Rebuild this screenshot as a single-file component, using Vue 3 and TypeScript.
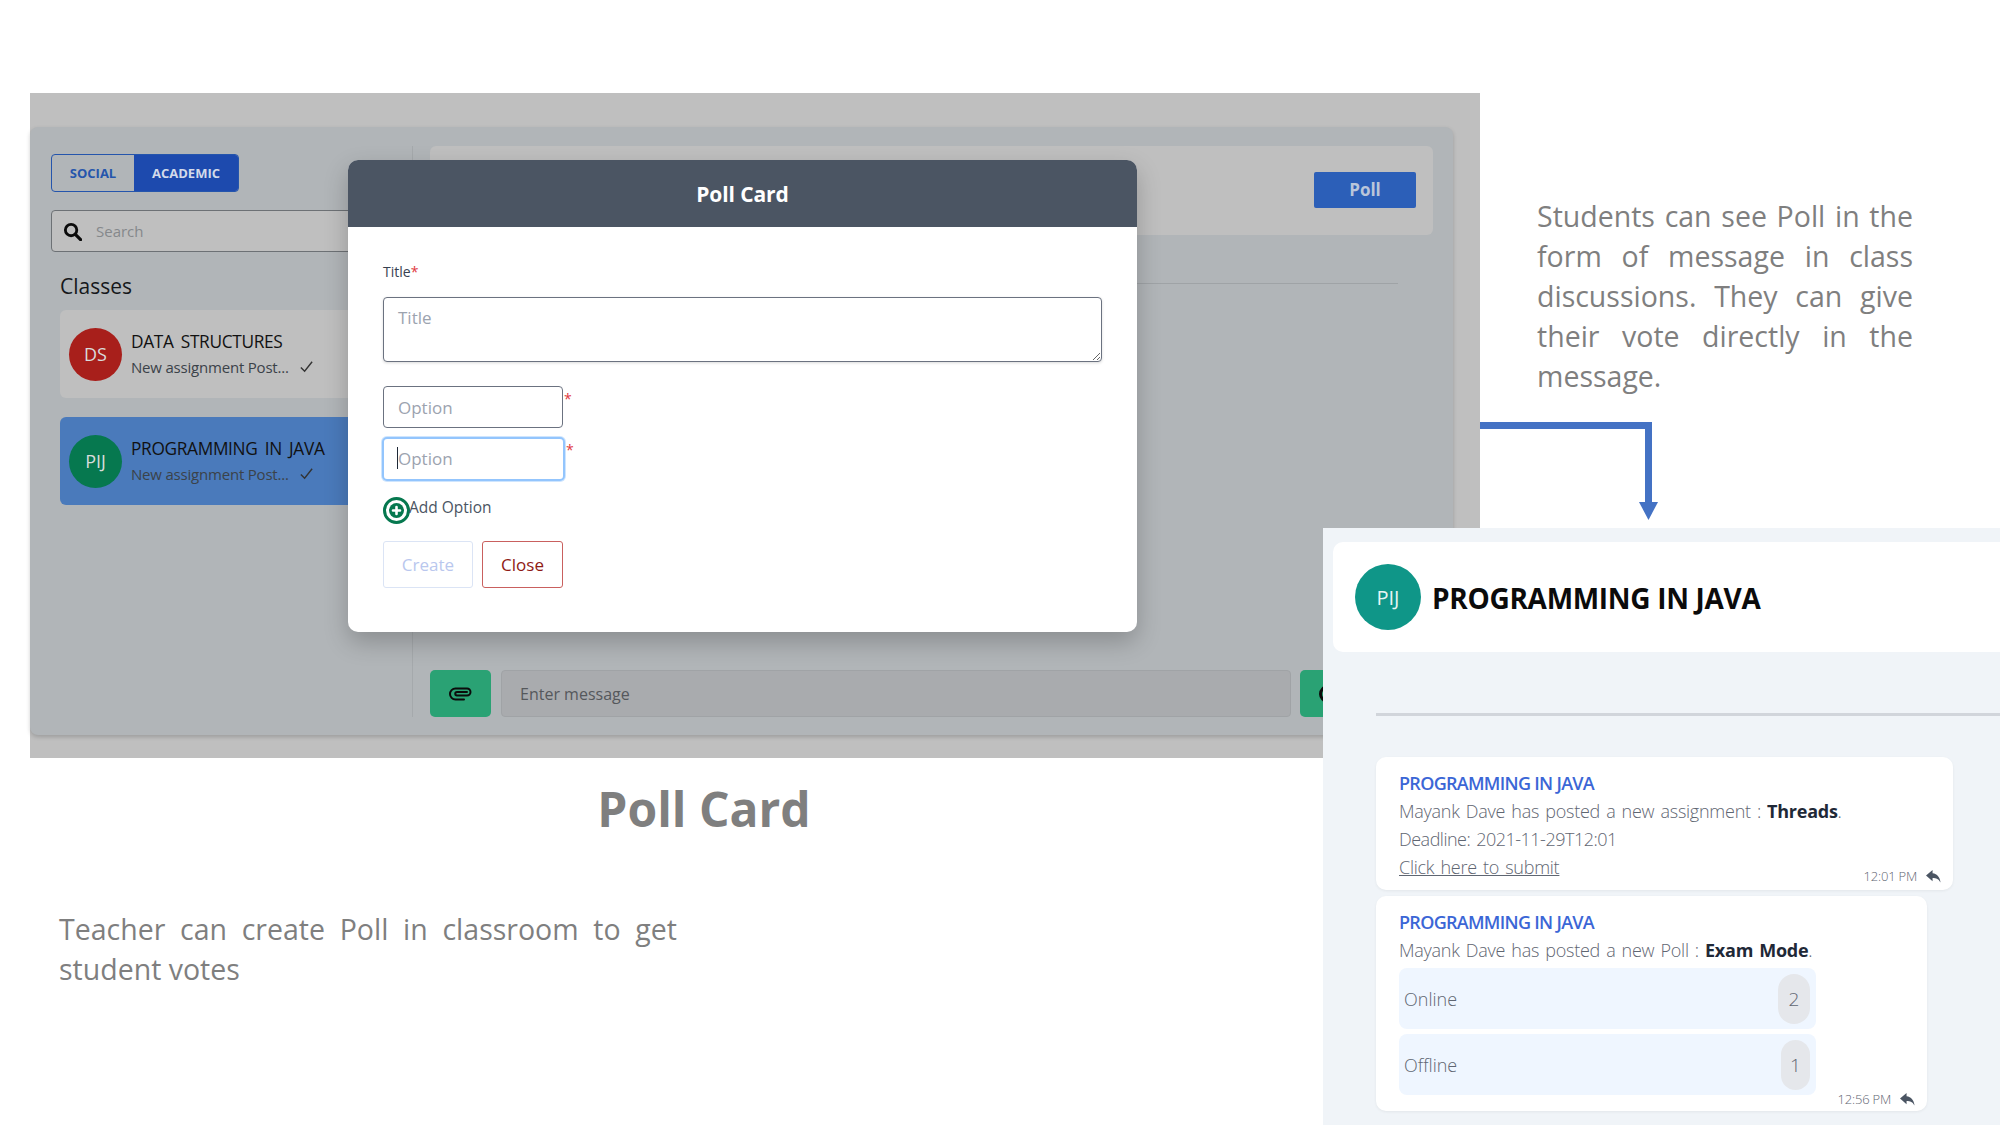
<script setup lang="ts">
interface ClassRow { initials: string; name: string; tone: string; active: boolean }
const classes: ClassRow[] = [
  { initials: 'DS', name: 'DATA STRUCTURES', tone: 'red', active: false },
  { initials: 'PIJ', name: 'PROGRAMMING IN JAVA', tone: 'green', active: true },
]
</script>

<template>
  <div class="page">
    <div class="top">
      <section class="shot">
        <div class="app">
          <aside class="sidebar">
            <div class="tabs">
              <span class="tab">SOCIAL</span>
              <span class="tab on">ACADEMIC</span>
            </div>
            <div class="search">
              <svg class="search-icon" viewBox="0 0 20 20" width="19" height="19">
                <circle cx="8.5" cy="8.5" r="6" fill="none" stroke="#0b0b0b" stroke-width="3" />
                <path d="M13 13l5.5 5.5" stroke="#0b0b0b" stroke-width="3.4" stroke-linecap="round" />
              </svg>
              <span>Search</span>
            </div>
            <h3 class="classes-title">Classes</h3>
            <div v-for="c in classes" :key="c.initials" class="class-row" :class="{ active: c.active }">
              <span class="side-avatar" :class="c.tone">{{ c.initials }}</span>
              <div class="class-text">
                <div class="class-name">{{ c.name }}</div>
                <div class="class-sub">
                  New assignment Post...
                  <svg viewBox="0 0 16 16" width="15" height="15">
                    <path d="M2 9l4 4 8-10" fill="none" stroke="#333" stroke-width="1.5" />
                  </svg>
                </div>
              </div>
            </div>
          </aside>
          <main class="main">
            <div class="poll-bar"><span class="poll-btn">Poll</span></div>
            <div class="main-rule"></div>
            <div class="composer">
              <span class="attach">
                <svg viewBox="0 0 24 14" width="24" height="14">
                  <path d="M15 12.500H6.500a5.500 5.500 0 0 1 0-11H18a3.500 3.500 0 0 1 0 7H8a1.750 1.750 0 0 1 0-3.500h10" fill="none" stroke="#0b0b0b" stroke-width="2" stroke-linecap="round" />
                </svg>
              </span>
              <span class="msg-input">Enter message</span>
              <span class="send"><i class="send-ring"></i></span>
            </div>
          </main>
        </div>

        <div class="modal">
          <header class="modal-head">Poll Card</header>
          <div class="modal-body">
            <label class="field-label">Title<span class="req">*</span></label>
            <textarea class="title-area" placeholder="Title"></textarea>
            <div class="opt-row first">
              <input class="opt" placeholder="Option" />
              <span class="req">*</span>
            </div>
            <div class="opt-row second">
              <div class="focus-wrap">
                <input class="opt focus" placeholder="Option" />
                <i class="caret"></i>
              </div>
              <span class="req">*</span>
            </div>
            <div class="add-row">
              <svg viewBox="0 0 27 27" width="27" height="27">
                <circle cx="13.5" cy="13.5" r="12" fill="#fff" stroke="#06784f" stroke-width="3" />
                <circle cx="13.5" cy="13.5" r="7.500" fill="#06784f" />
                <path d="M13.5 10v7M10 13.500h7" stroke="#fff" stroke-width="2.600" stroke-linecap="round" />
              </svg>
              <span>Add Option</span>
            </div>
            <div class="modal-btns">
              <button class="btn create">Create</button>
              <button class="btn close">Close</button>
            </div>
          </div>
        </div>
      </section>

      <p class="note">Students can see Poll in the form of message in class discussions. They can give their vote directly in the message.</p>
    </div>

    <h1 class="caption">Poll Card</h1>
    <p class="teacher">Teacher can create Poll in classroom to get student votes</p>

    <svg class="connector" viewBox="0 0 180 100" width="180" height="100">
      <path d="M0 3.500H168.500V82" fill="none" stroke="#4472c4" stroke-width="7" />
      <path d="M159 80h19l-9.500 18z" fill="#4472c4" />
    </svg>

    <aside class="panel">
      <div class="panel-head">
        <span class="panel-avatar">PIJ</span>
        <span class="panel-title">PROGRAMMING IN JAVA</span>
      </div>
      <div class="panel-rule"></div>

      <article class="msg msg-a">
        <div class="msg-title">PROGRAMMING IN JAVA</div>
        <div class="msg-line">Mayank Dave has posted a new assignment : <b>Threads</b>.</div>
        <div class="msg-line tight">Deadline: 2021-11-29T12:01</div>
        <div class="msg-line"><a class="link">Click here to submit</a></div>
        <div class="stamp">
          12:01 PM
          <svg viewBox="0 0 18 16" width="17" height="15"><path d="M8 1L1 7l7 6V9.500c4 0 6.500 1 8.500 5C16 9 13 5 8 4.500z" fill="#4b5563" /></svg>
        </div>
      </article>

      <article class="msg msg-b">
        <div class="msg-title">PROGRAMMING IN JAVA</div>
        <div class="msg-line">Mayank Dave has posted a new Poll : <b>Exam Mode</b>.</div>
        <div class="poll-list">
          <div class="poll-opt"><span>Online</span><span class="badge">2</span></div>
          <div class="poll-opt"><span>Offline</span><span class="badge narrow">1</span></div>
        </div>
        <div class="stamp">
          12:56 PM
          <svg viewBox="0 0 18 16" width="17" height="15"><path d="M8 1L1 7l7 6V9.500c4 0 6.500 1 8.500 5C16 9 13 5 8 4.500z" fill="#4b5563" /></svg>
        </div>
      </article>
    </aside>
  </div>
</template>

<style scoped>
.page {
  position: relative;
  width: 2000px;
  height: 1125px;
  overflow: hidden;
  background: #fff;
  font-family: "Open Sans", "Noto Sans", sans-serif;
  color: #7f7f7f;
}
.top {
  display: flex;
  align-items: flex-start;
  padding: 93px 0 0 30px;
}
.shot {
  position: relative;
  flex: none;
  width: 1450px;
  height: 665px;
  padding-top: 34px;
  box-sizing: border-box;
  background: #bfbfbf;
}
.app {
  display: flex;
  width: 1423px;
  height: 608px;
  box-sizing: border-box;
  background: #b1b5b8;
  border-radius: 8px;
  box-shadow: 0 2px 4px rgba(0, 0, 0, 0.18);
}
.sidebar {
  flex: none;
  width: 382px;
  box-sizing: border-box;
  padding: 27px 12px 0 21px;
}
.tabs {
  display: flex;
  width: 188px;
  height: 38px;
  box-sizing: border-box;
  border: 1px solid #2555ac;
  border-radius: 4px;
  overflow: hidden;
}
.tab {
  display: flex;
  align-items: center;
  justify-content: center;
  width: 82px;
  font-size: 13px;
  font-weight: 700;
  color: #2555ac;
}
.tab.on {
  flex: 1;
  background: #1d4aae;
  color: #d3daea;
}
.search {
  display: flex;
  align-items: center;
  gap: 14px;
  height: 42px;
  margin-top: 18px;
  padding-left: 11px;
  box-sizing: border-box;
  background: #bfbfbf;
  border: 1px solid #6d7175;
  border-radius: 4px;
  font-size: 15px;
  color: #85888b;
}
.classes-title {
  margin: 20px 0 10px 9px;
  font-size: 21px;
  line-height: 28px;
  font-weight: 400;
  color: #16181b;
}
.class-row {
  display: flex;
  align-items: center;
  gap: 9px;
  height: 88px;
  margin: 0 0 19px 9px;
  padding-left: 9px;
  box-sizing: border-box;
  background: #bfbfbf;
  border-radius: 6px;
}
.class-row.active {
  background: #4a7abb;
}
.class-text {
  padding-bottom: 1px;
}
.side-avatar {
  display: flex;
  align-items: center;
  justify-content: center;
  flex: none;
  width: 53px;
  height: 53px;
  border-radius: 50%;
  font-size: 18px;
  color: #d9dcdc;
}
.side-avatar.red { background: #a81f1b; }
.side-avatar.green { background: #06784f; }
.class-name {
  font-size: 17.300px;
  line-height: 24px;
  letter-spacing: -0.33px;
  word-spacing: 3px;
  color: #111;
  white-space: nowrap;
}
.class-sub {
  display: flex;
  align-items: center;
  gap: 10px;
  margin-top: 2px;
  font-size: 15px;
  line-height: 22px;
  letter-spacing: -0.2px;
  color: #3b4249;
  white-space: nowrap;
}
.main {
  display: flex;
  flex-direction: column;
  width: 1021px;
  height: 571px;
  margin-top: 19px;
  padding-left: 17px;
  box-sizing: border-box;
  border-left: 1px solid #a5a9ac;
}
.poll-bar {
  display: flex;
  align-items: center;
  justify-content: flex-end;
  width: 1003px;
  height: 89px;
  padding: 0 17px 2px 0;
  box-sizing: border-box;
  background: #bfbfbf;
  border-radius: 6px;
}
.poll-btn {
  display: flex;
  align-items: center;
  justify-content: center;
  width: 102px;
  height: 36px;
  background: #2c5fb8;
  border-radius: 2px;
  font-size: 17px;
  font-weight: 700;
  color: #bac6da;
}
.main-rule {
  width: 968px;
  height: 1px;
  margin-top: 48px;
  background: #9fa3a6;
}
.composer {
  display: flex;
  gap: 10px;
  margin-top: auto;
  overflow: hidden;
  width: 893px;
}
.attach {
  display: flex;
  align-items: center;
  justify-content: center;
  flex: none;
  width: 61px;
  height: 47px;
  background: #2aa274;
  border-radius: 5px;
}
.msg-input {
  display: flex;
  align-items: center;
  flex: none;
  width: 790px;
  height: 47px;
  padding-left: 18px;
  box-sizing: border-box;
  background: #a9abae;
  border: 1px solid #a0a3a6;
  border-radius: 4px;
  font-size: 16px;
  color: #55585c;
}
.send {
  display: flex;
  align-items: center;
  flex: none;
  width: 60px;
  height: 47px;
  margin-left: -1px;
  padding-left: 19px;
  box-sizing: border-box;
  background: #2aa274;
  border-radius: 5px;
}
.send-ring {
  flex: none;
  width: 18px;
  height: 18px;
  box-sizing: border-box;
  border: 3px solid #0b0b0b;
  border-radius: 50%;
}
.modal {
  position: absolute;
  left: 318px;
  top: 67px;
  width: 789px;
  height: 472px;
  overflow: hidden;
  background: #fff;
  border-radius: 10px;
  box-shadow: 0 10px 25px rgba(0, 0, 0, 0.22);
}
.modal-head {
  display: flex;
  align-items: center;
  justify-content: center;
  height: 67px;
  background: #4b5563;
  font-size: 21px;
  font-weight: 700;
  letter-spacing: -0.1px;
  color: #fff;
}
.modal-body {
  display: flex;
  flex-direction: column;
  align-items: flex-start;
  padding: 34px 35px 0;
}
.field-label {
  font-size: 14px;
  line-height: 22px;
  color: #374151;
}
.req {
  color: #e0393e;
  font-size: 14px;
}
.title-area {
  display: block;
  width: 719px;
  height: 65px;
  margin-top: 14px;
  padding: 8px 14px;
  box-sizing: border-box;
  border: 1px solid #6b7280;
  border-radius: 4px;
  box-shadow: 0 1px 3px rgba(0, 0, 0, 0.15);
  font: 17px/24px "Open Sans", sans-serif;
  outline: none;
}
.title-area::placeholder,
.opt::placeholder {
  color: #9ca3af;
  opacity: 1;
}
.opt-row {
  display: flex;
  align-items: flex-start;
  gap: 1px;
  margin-top: 9px;
}
.opt-row.first {
  margin-top: 24px;
}
.opt-row .req {
  line-height: 20px;
  padding-top: 3px;
}
.opt {
  display: block;
  width: 180px;
  height: 42px;
  padding: 0 14px;
  box-sizing: border-box;
  border: 1px solid #6b7280;
  border-radius: 4px;
  font: 17px "Open Sans", sans-serif;
  outline: none;
}
.focus-wrap {
  position: relative;
  margin-left: -1px;
}
.opt.focus {
  width: 183px;
  height: 44px;
  padding: 0 0 2px 14px;
  border: 2px solid #93c5fd;
  border-radius: 5px;
  box-shadow: 0 0 0 1px rgba(147, 197, 253, 0.45);
}
.caret {
  position: absolute;
  left: 15px;
  top: 10px;
  width: 1px;
  height: 22px;
  background: #1f2937;
}
.add-row {
  display: flex;
  align-items: flex-start;
  margin-top: 16px;
  height: 27px;
  font-size: 15.500px;
  line-height: 20px;
  color: #4b5563;
}
.add-row span {
  margin-left: -1px;
}
.modal-btns {
  display: flex;
  gap: 9px;
  margin-top: 17px;
}
.btn {
  height: 47px;
  padding: 0;
  background: #fff;
  border-radius: 3px;
  font: 17px "Open Sans", sans-serif;
}
.btn.create {
  width: 90px;
  border: 1px solid #dbe4f5;
  color: #b9c7ee;
}
.btn.close {
  width: 81px;
  border: 1px solid #c9605e;
  color: #8f1a14;
}
.note {
  flex: none;
  width: 376px;
  margin: 103px 0 0 57px;
  font-size: 28.500px;
  line-height: 40px;
  text-align: justify;
}
.caption {
  width: 1348px;
  margin: 17px 0 0 30px;
  font-size: 48px;
  line-height: 68px;
  font-weight: 700;
  text-align: center;
}
.teacher {
  width: 618px;
  margin: 66px 0 0 59px;
  font-size: 28.500px;
  line-height: 40px;
  text-align: justify;
}
.connector {
  position: absolute;
  left: 1480px;
  top: 422px;
}
.panel {
  position: absolute;
  left: 1323px;
  top: 528px;
  right: 0;
  bottom: 0;
  padding: 14px 0 0 10px;
  background: #f0f4f8;
}
.panel-head {
  display: flex;
  align-items: center;
  gap: 11px;
  height: 110px;
  padding-left: 22px;
  box-sizing: border-box;
  background: #fff;
  border-radius: 10px 0 0 10px;
}
.panel-avatar {
  display: flex;
  align-items: center;
  justify-content: center;
  width: 66px;
  height: 66px;
  border-radius: 50%;
  background: #0f9688;
  font-size: 20px;
  color: #e8f5f3;
}
.panel-title {
  padding-top: 2px;
  font-size: 28px;
  font-weight: 700;
  color: #0b0b0b;
  letter-spacing: -0.3px;
}
.panel-rule {
  height: 3px;
  margin: 61px 0 41px 43px;
  background: #d1d5db;
}
.msg {
  position: relative;
  margin-left: 43px;
  padding: 12px 23px 0;
  box-sizing: border-box;
  background: #fff;
  border-radius: 10px;
  box-shadow: 0 1px 3px rgba(0, 0, 0, 0.06);
}
.msg-a {
  width: 577px;
  height: 133px;
}
.msg-b {
  width: 551px;
  height: 215px;
  margin-top: 6px;
}
.msg-title {
  font-size: 18px;
  line-height: 28px;
  font-weight: 600;
  letter-spacing: -0.7px;
  color: #3b66d6;
}
.msg-line {
  font-size: 18px;
  line-height: 28px;
  font-weight: 300;
  letter-spacing: -0.25px;
  word-spacing: 1.7px;
  color: #5f6672;
}
.msg-line.tight {
  letter-spacing: -0.5px;
}
.msg-line b {
  font-weight: 700;
  color: #1f2937;
}
.link {
  text-decoration: underline;
}
.stamp {
  position: absolute;
  right: 11px;
  bottom: 6px;
  display: flex;
  align-items: center;
  gap: 8px;
  font-size: 13px;
  line-height: 16px;
  font-weight: 300;
  letter-spacing: -0.2px;
  color: #5f6672;
}
.msg-b .stamp {
  bottom: 4px;
}
.poll-list {
  display: flex;
  flex-direction: column;
  gap: 5px;
  margin-top: 4px;
}
.poll-opt {
  display: flex;
  align-items: center;
  justify-content: space-between;
  width: 417px;
  height: 61px;
  padding: 0 4px 0 5px;
  box-sizing: border-box;
  background: #eff6ff;
  border-radius: 8px;
  font-size: 18px;
  font-weight: 300;
  color: #5f6672;
}
.badge {
  display: flex;
  align-items: center;
  justify-content: center;
  width: 32px;
  height: 50px;
  margin-right: 2px;
  background: #e5e7eb;
  border-radius: 16px;
  font-size: 19px;
}
.badge.narrow {
  width: 29px;
}
</style>

<style>
html, body {
  margin: 0;
  background: #fff;
}
</style>
